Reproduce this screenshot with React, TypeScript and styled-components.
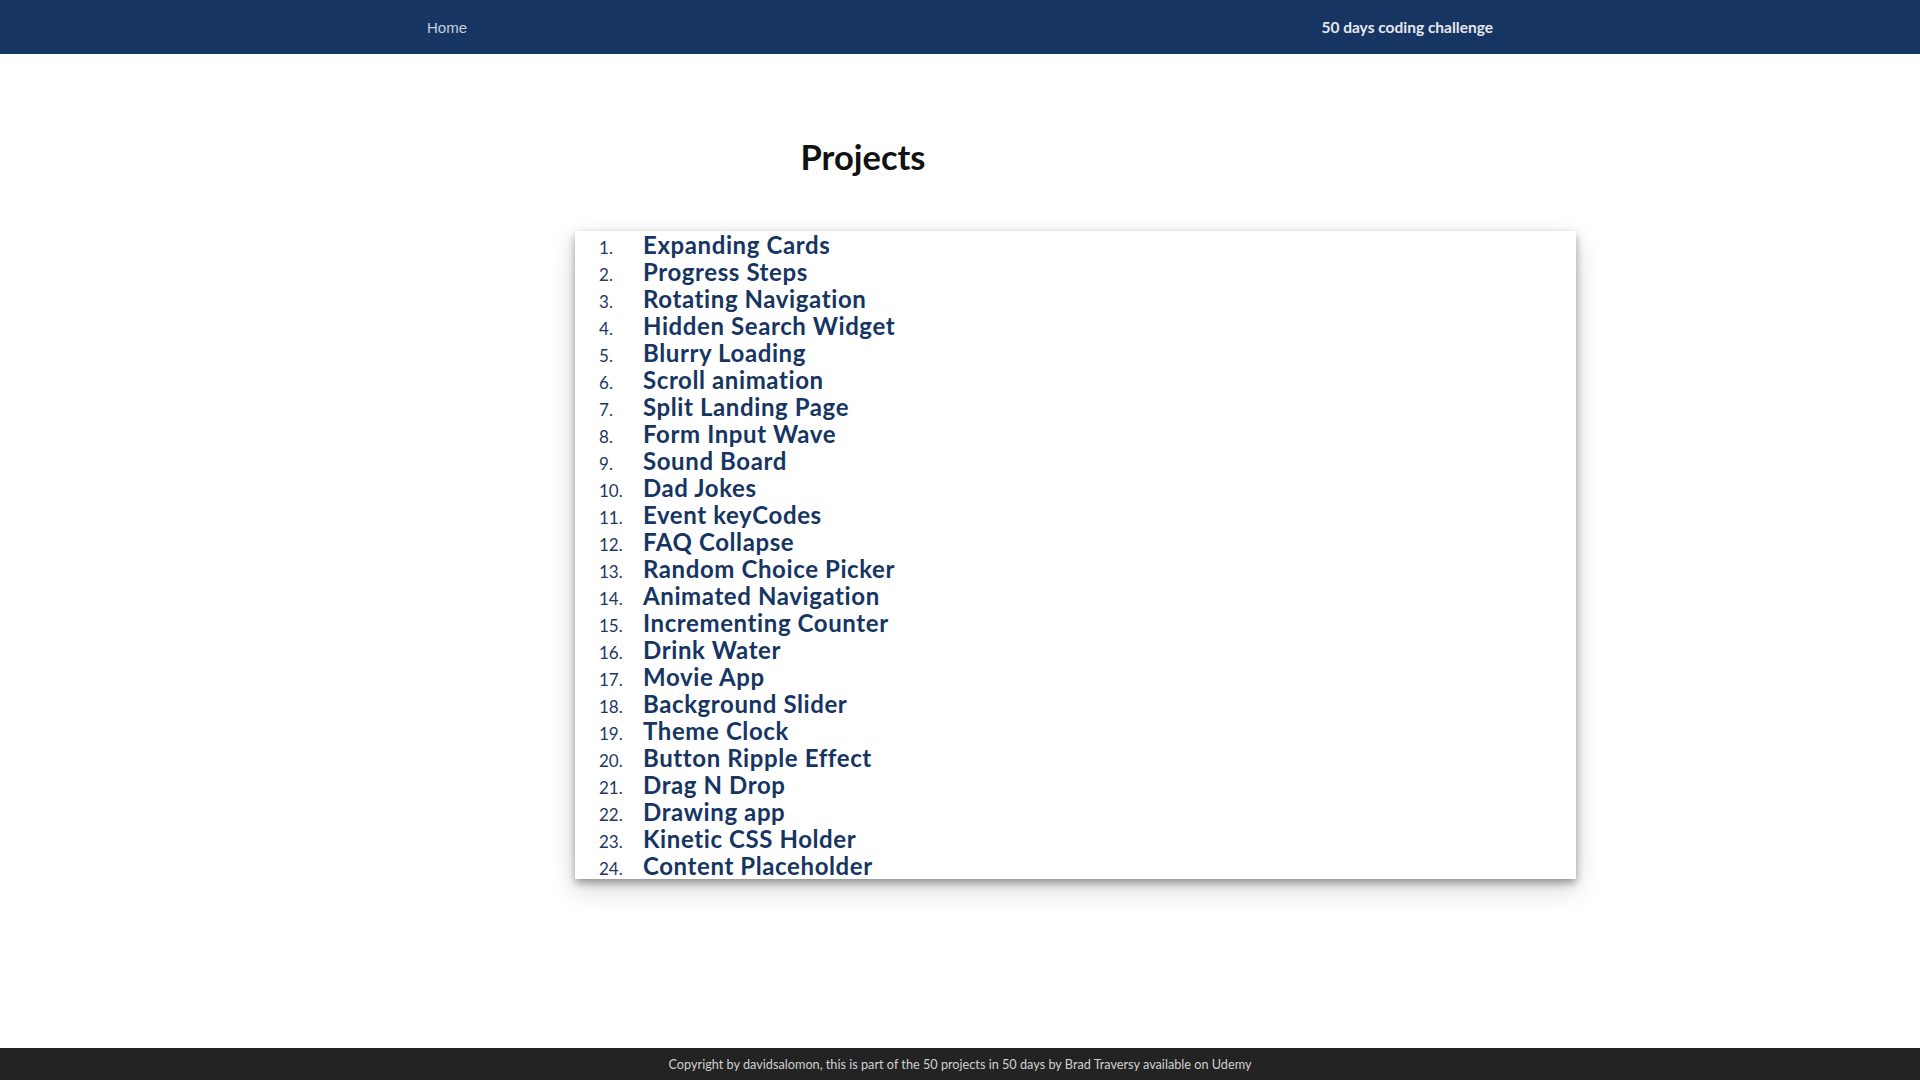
import React from 'react'
import styled, {createGlobalStyle} from 'styled-components'

const GlobalStyle = createGlobalStyle`
  * { box-sizing: border-box; }
  body {
    margin: 0;
    background: #fff;
    font-family: Lato, "Noto Sans", sans-serif;
  }
`;

const Page = styled.div`
  min-height: 100vh;
  display: flex;
  flex-direction: column;
`;

const NavBar = styled.nav`
  height: 54px;
  background: #163563;
  display: flex;
  align-items: center;
  justify-content: space-between;
  padding: 0 427px;
`;

const HomeLink = styled.a`
  color: #c9ced8;
  font-family: "Liberation Sans", Arial, sans-serif;
  font-size: 15px;
  text-decoration: none;
`;

const Brand = styled.span`
  color: #e6e8ec;
  font-size: 15.5px;
  font-weight: 700;
`;

const Main = styled.main`
  margin-left: calc(50% - 385px);
  width: 1001px;
  padding-top: 83px;
`;

const Title = styled.h1`
  width: 576px;
  margin: 0 0 54px;
  text-align: center;
  font-size: 34.5px;
  font-weight: 700;
  color: #111;
  line-height: 40px;
`;

const Card = styled.ol`
  list-style: none;
  margin: 0;
  padding: 0 24px;
  background: #fff;
  box-shadow: 0 4px 8px rgba(0, 0, 0, 0.35), 0 10px 26px rgba(0, 0, 0, 0.16);
`;

const Item = styled.li`
  display: flex;
  align-items: baseline;
  height: 27px;
  line-height: 27px;
`;

const Num = styled.span`
  width: 44px;
  flex: none;
  font-size: 17px;
  color: #1c3766;
`;

const ProjectLink = styled.a`
  font-size: 24px;
  font-weight: 700;
  color: #163563;
  text-decoration: none;
  letter-spacing: 0.6px;
`;

const Footer = styled.footer`
  margin-top: auto;
  height: 32px;
  background: #232323;
  color: #d0d0d0;
  font-size: 12.7px;
  display: flex;
  align-items: center;
  justify-content: center;
`;

const projects = [
    'Expanding Cards', 'Progress Steps', 'Rotating Navigation', 'Hidden Search Widget',
    'Blurry Loading', 'Scroll animation', 'Split Landing Page', 'Form Input Wave',
    'Sound Board', 'Dad Jokes', 'Event keyCodes', 'FAQ Collapse',
    'Random Choice Picker', 'Animated Navigation', 'Incrementing Counter', 'Drink Water',
    'Movie App', 'Background Slider', 'Theme Clock', 'Button Ripple Effect',
    'Drag N Drop', 'Drawing app', 'Kinetic CSS Holder', 'Content Placeholder',
]

function App() {
    return (
        <Page>
            <GlobalStyle/>
            <NavBar>
                <HomeLink href="#">Home</HomeLink>
                <Brand>50 days coding challenge</Brand>
            </NavBar>
            <Main>
                <Title>Projects</Title>
                <Card>
                    {projects.map((p, i) => (
                        <Item key={p}>
                            <Num>{i + 1}.</Num>
                            <ProjectLink href="#">{p}</ProjectLink>
                        </Item>
                    ))}
                </Card>
            </Main>
            <Footer>
                Copyright by davidsalomon, this is part of the 50 projects in 50 days by Brad Traversy available on Udemy
            </Footer>
        </Page>
    )
}

export default App;
